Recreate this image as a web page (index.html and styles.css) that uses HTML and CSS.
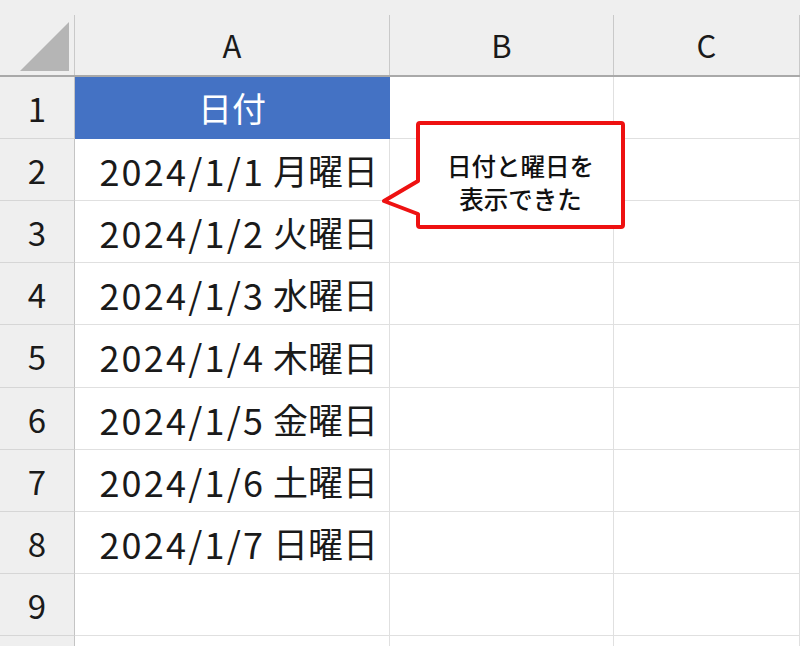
FILE: index.html
```html
<!DOCTYPE html>
<html lang="ja">
<head>
<meta charset="utf-8">
<link rel="stylesheet" href="styles.css">
</head>
<body>
<div class="sheet">
  <div class="corner"><div class="corner-in"><svg class="corner-tri" width="50" height="50" viewBox="0 0 50 50"><polygon points="49,0 49,49 0,49" fill="#b5b5b5"/></svg></div></div>
  <div class="colhead"><div class="colhead-in">A</div></div>
  <div class="colhead"><div class="colhead-in">B</div></div>
  <div class="colhead"><div class="colhead-in">C</div></div>

  <div class="rowhead">1</div><div class="cell cell-title">日付</div><div class="cell"></div><div class="cell"></div>
  <div class="rowhead">2</div><div class="cell cell-date"><span class="num">2024/1/1</span> 月曜日</div><div class="cell"></div><div class="cell"></div>
  <div class="rowhead">3</div><div class="cell cell-date"><span class="num">2024/1/2</span> 火曜日</div><div class="cell"></div><div class="cell"></div>
  <div class="rowhead">4</div><div class="cell cell-date"><span class="num">2024/1/3</span> 水曜日</div><div class="cell"></div><div class="cell"></div>
  <div class="rowhead">5</div><div class="cell cell-date"><span class="num">2024/1/4</span> 木曜日</div><div class="cell"></div><div class="cell"></div>
  <div class="rowhead">6</div><div class="cell cell-date"><span class="num">2024/1/5</span> 金曜日</div><div class="cell"></div><div class="cell"></div>
  <div class="rowhead">7</div><div class="cell cell-date"><span class="num">2024/1/6</span> 土曜日</div><div class="cell"></div><div class="cell"></div>
  <div class="rowhead">8</div><div class="cell cell-date"><span class="num">2024/1/7</span> 日曜日</div><div class="cell"></div><div class="cell"></div>
  <div class="rowhead">9</div><div class="cell"></div><div class="cell"></div><div class="cell"></div>
  <div class="rowhead"></div><div class="cell"></div><div class="cell"></div><div class="cell"></div>

  <div class="callout">
    <svg class="callout-shape" width="254" height="118" viewBox="0 0 254 118">
      <path d="M44,8 H245 Q247,8 247,10 V110 Q247,112 245,112 H44 Q42,112 42,110 V99 L8,86 L42,66 V10 Q42,8 44,8 Z" fill="#ffffff" stroke="#ee1111" stroke-width="4" stroke-linejoin="round"/>
    </svg>
    <div class="callout-text">
      <div class="callout-line">日付と曜日を</div>
      <div class="callout-line">表示できた</div>
    </div>
  </div>
</div>
</body>
</html>
```
FILE: styles.css
```css
html, body {
  margin: 0;
  padding: 0;
  background: #ffffff;
}

body {
  font-family: "Noto Sans CJK JP", sans-serif;
  color: #1e1e1e;
}

.sheet {
  position: relative;
  width: 800px;
  height: 646px;
  overflow: hidden;
  display: grid;
  grid-template-columns: 75px 315px 224px 1fr;
  grid-template-rows: 77px 62px 62px 62px 62px 63px 62px 62px 62px 62px 62px;
}

.corner,
.colhead {
  background: #efefef;
  padding-top: 15px;
  border-bottom: 2px solid #a9a9a9;
  box-sizing: border-box;
}

.corner-in,
.colhead-in {
  height: 100%;
  box-sizing: border-box;
  border-right: 1px solid #c9c9c9;
}

.corner-in {
  padding: 7px 0 0 20px;
}

.corner-tri {
  display: block;
}

.colhead-in {
  display: flex;
  align-items: center;
  justify-content: center;
  font-size: 31px;
  color: #1a1a1a;
  padding-bottom: 2px;
}

.rowhead {
  background: #efefef;
  border-right: 1px solid #c4c4c4;
  border-bottom: 1px solid #d6d6d6;
  box-sizing: border-box;
  display: flex;
  align-items: center;
  justify-content: center;
  font-size: 33px;
  color: #1a1a1a;
}

.cell {
  border-right: 1px solid #e0e0e0;
  border-bottom: 1px solid #e0e0e0;
  box-sizing: border-box;
  display: flex;
  align-items: center;
  font-size: 35px;
}

.cell-title {
  background: #4472c4;
  color: #ffffff;
  justify-content: center;
  border-color: #4472c4;
  font-size: 34px;
}

.cell-date {
  justify-content: flex-end;
  padding-right: 11px;
  color: #1a1a1a;
  white-space: pre;
}

.num {
  font-size: 36px;
  letter-spacing: 2.2px;
}

.callout {
  position: absolute;
  left: 376px;
  top: 115px;
  width: 254px;
  height: 118px;
}

.callout-shape {
  position: absolute;
  left: 0;
  top: 0;
}

.callout-text {
  position: absolute;
  left: 44px;
  top: 34px;
  width: 201px;
  text-align: center;
  font-size: 24.5px;
  font-weight: 500;
  color: #111111;
}

.callout-line {
  height: 33px;
  line-height: 33px;
}
```
